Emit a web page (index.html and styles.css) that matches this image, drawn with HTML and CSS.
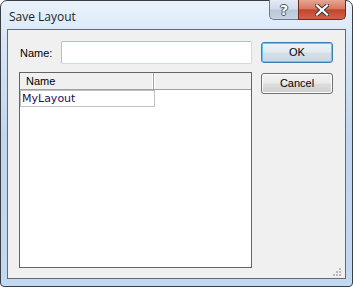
FILE: index.html
```html
<!DOCTYPE html>
<html>
<head>
<meta charset="utf-8">
<link rel="stylesheet" href="styles.css">
</head>
<body>
<div class="window">
  <div class="titlebar">
    <div class="title">Save Layout</div>
    <div class="caption-buttons">
      <div class="cap-btn help"><span>?</span></div>
      <div class="cap-btn close">
        <svg width="14" height="12" viewBox="0 0 14 12">
          <path d="M2 1.5 L12 10.5 M12 1.5 L2 10.5" stroke="#3b3b3b" stroke-width="4.2" stroke-linecap="square"/>
          <path d="M2 1.5 L12 10.5 M12 1.5 L2 10.5" stroke="#ffffff" stroke-width="2.2" stroke-linecap="square"/>
        </svg>
      </div>
    </div>
  </div>
  <div class="client">
    <div class="main">
      <div class="name-row">
        <label class="name-label">Name:</label>
        <div class="field"></div>
      </div>
      <div class="list">
        <div class="list-header">
          <div class="col col-name">Name</div>
          <div class="col col-rest"></div>
        </div>
        <div class="list-item">MyLayout</div>
      </div>
    </div>
    <div class="buttons">
      <div class="btn default">OK</div>
      <div class="btn">Cancel</div>
    </div>
    <svg class="grip" width="10" height="10" viewBox="0 0 10 10">
      <g fill="#b9b9b9">
        <rect x="7" y="1" width="2" height="2"/>
        <rect x="4" y="4" width="2" height="2"/>
        <rect x="7" y="4" width="2" height="2"/>
        <rect x="1" y="7" width="2" height="2"/>
        <rect x="4" y="7" width="2" height="2"/>
        <rect x="7" y="7" width="2" height="2"/>
      </g>
    </svg>
  </div>
</div>
</body>
</html>
```
FILE: styles.css
```css
html, body {
  margin: 0;
  padding: 0;
  background: #ffffff;
}
.window {
  width: 353px;
  height: 287px;
  box-sizing: border-box;
  border: 1px solid #3a3f47;
  border-radius: 7px 7px 4px 4px;
  background: linear-gradient(to bottom, #eaf3fc 0px, #d6e6f6 40px, #bfd6ee 140px, #c2d9f1 287px);
  padding: 0 6px 7px 6px;
  display: flex;
  flex-direction: column;
  font-family: "Liberation Sans", Arial, sans-serif;
  position: relative;
}
.titlebar {
  height: 28px;
  display: flex;
  align-items: flex-start;
  justify-content: space-between;
}
.title {
  font-family: "Open Sans", "Noto Sans", sans-serif;
  font-size: 12px;
  color: #1e1e1e;
  margin-top: 7px;
  margin-left: 2px;
}
.caption-buttons {
  display: flex;
  margin-top: -1px;
}
.cap-btn {
  height: 20px;
  box-sizing: border-box;
  border: 1px solid #6d7a8c;
  border-top: none;
  display: flex;
  align-items: center;
  justify-content: center;
}
.help {
  width: 29px;
  border-radius: 0 0 0 5px;
  border-right: none;
  background: linear-gradient(to bottom, #e3ebf4 0%, #d0dbe8 48%, #b9c7d8 52%, #c6d3e2 100%);
}
.help span {
  font-family: "DejaVu Sans", sans-serif;
  font-weight: bold;
  font-size: 14px;
  color: #ffffff;
  text-shadow: 1px 0 0 #4b5565, -1px 0 0 #4b5565, 0 1px 0 #4b5565, 0 -1px 0 #4b5565;
  line-height: 1;
}
.close {
  width: 48px;
  border-radius: 0 0 5px 0;
  border-color: #6b2a22;
  background: linear-gradient(to bottom, #e8a593 0%, #d67a62 45%, #c2452c 52%, #d2624a 100%);
}
.client {
  flex: 1;
  border: 1px solid #5f6b79;
  background: #f0f0f0;
  display: flex;
  padding: 11px 0 0 11px;
  position: relative;
}
.main {
  width: 233px;
  display: flex;
  flex-direction: column;
}
.name-row {
  display: flex;
  align-items: center;
  height: 23px;
}
.name-label {
  font-size: 11px;
  color: #000;
  margin-left: 1px;
  width: 41px;
}
.field {
  width: 191px;
  height: 23px;
  box-sizing: border-box;
  border: 1px solid;
  border-color: #a9c3de #c9dbed #c9dbed #a9c3de;
  border-radius: 2px;
  background: #fff;
}
.list {
  margin-top: 8px;
  height: 196px;
  box-sizing: border-box;
  border: 1px solid #646464;
  background: #fff;
}
.list-header {
  display: flex;
  height: 16px;
  background: #f0f0f0;
  border-bottom: 1px solid #a0a0a0;
}
.col {
  box-sizing: border-box;
  height: 16px;
  font-size: 11px;
  line-height: 16px;
  color: #000;
}
.col-name {
  width: 134px;
  padding-left: 6px;
  border-right: 1px solid #a0a0a0;
  box-shadow: inset -1px 0 0 #ffffff;
}
.col-rest {
  flex: 1;
  border-left: 1px solid #ffffff;
}
.list-item {
  width: 135px;
  height: 17px;
  box-sizing: border-box;
  border: 1px solid #c0c0c0;
  font-family: "DejaVu Sans", sans-serif;
  font-size: 11px;
  line-height: 15px;
  color: #2a1050;
  padding-left: 1px;
}
.buttons {
  margin-left: 9px;
  margin-top: 1px;
  display: flex;
  flex-direction: column;
  gap: 10px;
}
.btn {
  width: 72px;
  height: 21px;
  box-sizing: border-box;
  border: 1px solid #707070;
  border-radius: 3px;
  background: linear-gradient(to bottom, #f2f2f2 0%, #ebebeb 48%, #dddddd 52%, #cfcfcf 100%);
  box-shadow: inset 0 0 0 1px #fcfcfc;
  font-size: 11px;
  line-height: 19px;
  text-align: center;
  color: #000;
}
.btn.default {
  border-color: #3c7fb1;
  background: linear-gradient(to bottom, #eef4f8 0%, #e2ebf1 48%, #d4e0e8 52%, #c9d7e1 100%);
  box-shadow: inset 0 0 0 1px #5fc8f5;
}
.grip {
  position: absolute;
  right: 3px;
  bottom: 1px;
}
```
